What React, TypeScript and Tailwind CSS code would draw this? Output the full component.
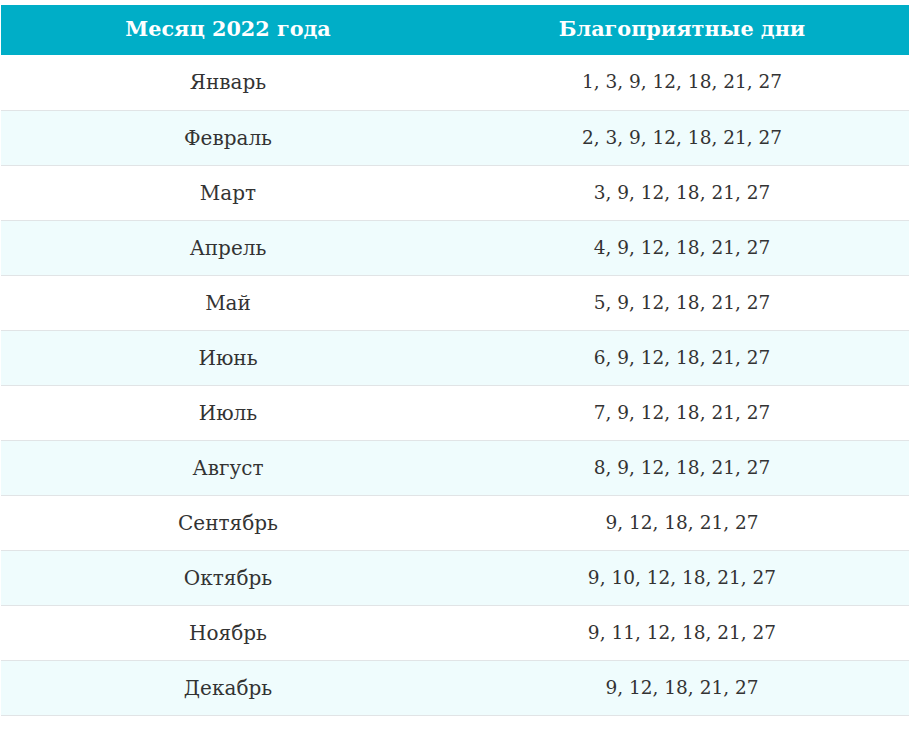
import React from "react";

const rows: [string, string][] = [
  ["Январь", "1, 3, 9, 12, 18, 21, 27"],
  ["Февраль", "2, 3, 9, 12, 18, 21, 27"],
  ["Март", "3, 9, 12, 18, 21, 27"],
  ["Апрель", "4, 9, 12, 18, 21, 27"],
  ["Май", "5, 9, 12, 18, 21, 27"],
  ["Июнь", "6, 9, 12, 18, 21, 27"],
  ["Июль", "7, 9, 12, 18, 21, 27"],
  ["Август", "8, 9, 12, 18, 21, 27"],
  ["Сентябрь", "9, 12, 18, 21, 27"],
  ["Октябрь", "9, 10, 12, 18, 21, 27"],
  ["Ноябрь", "9, 11, 12, 18, 21, 27"],
  ["Декабрь", "9, 12, 18, 21, 27"],
];

export default function App() {
  return (
    <div className="bg-white w-[912px] h-[732px] pt-[5px] pl-[1px] font-['DejaVu_Serif',serif]">
      <table className="w-[908px] border-collapse table-fixed">
        <thead>
          <tr className="bg-[#00aec7] h-[50px]">
            <th className="w-1/2 text-white font-bold text-[20.75px] text-center align-middle">Месяц 2022 года</th>
            <th className="w-1/2 text-white font-bold text-[20.75px] text-center align-middle">Благоприятные дни</th>
          </tr>
        </thead>
        <tbody>
          {rows.map(([m, d], i) => (
            <tr
              key={m}
              className={(i % 2 === 1 ? "bg-[#effcfd] " : "bg-white ") + "h-[55px] border-b border-[#e1e4e6]"}
            >
              <td className="text-center align-middle text-[20px] text-[#333333]">{m}</td>
              <td className="text-center align-middle text-[18.5px] text-[#333333]">{d}</td>
            </tr>
          ))}
        </tbody>
      </table>
    </div>
  );
}
